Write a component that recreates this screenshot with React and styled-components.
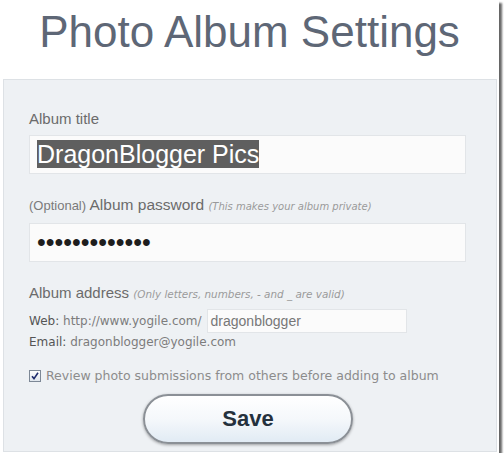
import styled, { createGlobalStyle } from 'styled-components';

const Global = createGlobalStyle`
  html, body {
    margin: 0;
    padding: 0;
    background: #ffffff;
  }
`;

const Frame = styled.div`
  width: 499px;
  height: 453px;
  background: #ffffff;
  box-shadow: 3px 3px 2px rgba(0, 0, 0, 0.6);
  display: flex;
  flex-direction: column;
`;

const Header = styled.div`
  height: 79px;
  box-sizing: border-box;
  padding-top: 6px;
  text-align: center;
`;

const Title = styled.h1`
  margin: 0;
  font-family: 'Liberation Sans', Arial, sans-serif;
  font-weight: normal;
  font-size: 44px;
  line-height: 51px;
  color: #5e6776;
`;

const Panel = styled.div`
  flex: 1;
  margin: 0 2px 1px 3px;
  background: #eef1f4;
  border: 1px solid #dde1e5;
  padding: 30px 0 0 25px;
  display: flex;
  flex-direction: column;
`;

const Label = styled.div`
  font-family: 'Liberation Sans', Arial, sans-serif;
  font-size: ${p => p.$size || 15}px;
  line-height: 18px;
  color: #6b6b6b;
  margin-top: ${p => p.$top || 0}px;
  white-space: nowrap;
`;

const Small = styled.span`
  font-size: 13px;
  color: #7a7a7a;
`;

const Hint = styled.span`
  font-family: 'DejaVu Sans', Verdana, sans-serif;
  font-style: italic;
  font-size: ${p => p.$size || 10}px;
  color: #9a9a9a;
`;

const Field = styled.div`
  width: 437px;
  height: 39px;
  box-sizing: border-box;
  margin-top: 7px;
  background: #fbfbfb;
  border: 1px solid #e2e5e8;
  padding: 4px 0 0 7px;
  font-family: 'Liberation Sans', Arial, sans-serif;
  font-size: 25px;
  line-height: 29px;
  color: #222;
`;

const Selected = styled.span`
  background: #5f5f5f;
  color: #ffffff;
`;

const Dots = styled.span`
  color: #1e1e1e;
`;

const WebRow = styled.div`
  display: flex;
  align-items: center;
  height: 24px;
  margin-top: 6px;
`;

const Info = styled.div`
  font-family: 'DejaVu Sans', Verdana, sans-serif;
  font-size: 12px;
  line-height: 16px;
  color: #7c7c7c;
  white-space: nowrap;
  margin-top: ${p => p.$top || 0}px;
`;

const Key = styled.span`
  color: #555;
`;

const SlugBox = styled.div`
  width: 200px;
  height: 24px;
  box-sizing: border-box;
  margin-left: 5px;
  background: #fbfbfb;
  border: 1px solid #e2e5e8;
  padding-left: 3px;
  font-family: 'Liberation Sans', Arial, sans-serif;
  font-size: 14px;
  line-height: 22px;
  color: #777;
`;

const CheckRow = styled.label`
  display: flex;
  align-items: center;
  gap: 5px;
  margin-top: 18px;
  font-family: 'DejaVu Sans', Verdana, sans-serif;
  font-size: 12.5px;
  line-height: 16px;
  color: #8c8c8c;
  white-space: nowrap;
`;

const ButtonRow = styled.div`
  display: flex;
  justify-content: center;
  margin-top: 10px;
  padding-right: 29px;
`;

const SaveButton = styled.button`
  width: 210px;
  height: 50px;
  border-radius: 25px;
  border: 2px solid #8b9096;
  background: linear-gradient(#ffffff 0%, #f5f8fb 50%, #e1ebf4 100%);
  box-shadow: 0 1px 3px rgba(0, 0, 0, 0.35), inset 0 1px 0 #ffffff;
  font-family: 'Liberation Sans', Arial, sans-serif;
  font-weight: bold;
  font-size: 22px;
  color: #25313d;
  cursor: pointer;
`;

const CheckBox = () => (
  <svg width="12" height="12" viewBox="0 0 12 12">
    <defs>
      <linearGradient id="cb" x1="0" y1="0" x2="0" y2="1">
        <stop offset="0" stopColor="#ffffff" />
        <stop offset="1" stopColor="#dfe5ec" />
      </linearGradient>
    </defs>
    <rect x="0.5" y="0.5" width="11" height="11" fill="url(#cb)" stroke="#7d8896" />
    <path d="M3 6.2 L5 8.6 L9 2.8" fill="none" stroke="#1f2d6e" strokeWidth="1.6" />
  </svg>
);

export default function App() {
  return (
    <>
      <Global />
      <Frame>
        <Header>
          <Title>Photo Album Settings</Title>
        </Header>
        <Panel>
          <Label>Album title</Label>
          <Field>
            <Selected>DragonBlogger Pics</Selected>
          </Field>

          <Label $top={22} $size={15.5}>
            <Small>(Optional)</Small> Album password <Hint>(This makes your album private)</Hint>
          </Label>
          <Field>
            <Dots>•••••••••••••</Dots>
          </Field>

          <Label $top={22}>
            Album address <Hint $size={10.4}>(Only letters, numbers, - and _ are valid)</Hint>
          </Label>
          <WebRow>
            <Info>
              <Key>Web:</Key> http://www.yogile.com/
            </Info>
            <SlugBox>dragonblogger</SlugBox>
          </WebRow>
          <Info $top={1}>
            <Key>Email:</Key> dragonblogger@yogile.com
          </Info>

          <CheckRow>
            <CheckBox />
            Review photo submissions from others before adding to album
          </CheckRow>

          <ButtonRow>
            <SaveButton>Save</SaveButton>
          </ButtonRow>
        </Panel>
      </Frame>
    </>
  );
}
